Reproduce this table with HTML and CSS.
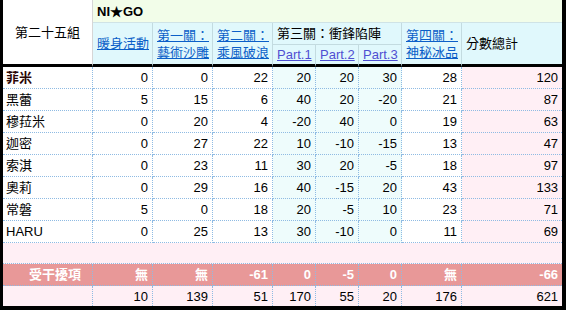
FILE: index.html
```html
<!DOCTYPE html>
<html lang="zh-Hant">
<head>
<meta charset="utf-8">
<title>第二十五組</title>
<link rel="stylesheet" href="styles.css">
</head>
<body>
<div class="frame">
<table class="score">
  <colgroup>
    <col class="c-name"><col class="c-60"><col class="c-60"><col class="c-60"><col class="c-43"><col class="c-43"><col class="c-43"><col class="c-60"><col class="c-total">
  </colgroup>
  <thead>
    <tr class="h1">
      <th rowspan="3" class="group">第二十五組</th>
      <th colspan="8" class="team">NI★GO</th>
    </tr>
    <tr class="h2">
      <th rowspan="2" class="hc"><a href="#">暖身活動</a></th>
      <th rowspan="2" class="hc"><a href="#">第一關：<br>藝術沙雕</a></th>
      <th rowspan="2" class="hc"><a href="#">第二關：<br>乘風破浪</a></th>
      <th colspan="3" class="hc">第三關：衝鋒陷陣</th>
      <th rowspan="2" class="hc"><a href="#">第四關：<br>神秘冰品</a></th>
      <th rowspan="2" class="hc last">分數總計</th>
    </tr>
    <tr class="h3">
      <th class="hc"><a href="#" class="v">Part.1</a></th>
      <th class="hc"><a href="#" class="v">Part.2</a></th>
      <th class="hc"><a href="#" class="v">Part.3</a></th>
    </tr>
  </thead>
  <tbody>
    <tr><td class="name lead">菲米</td><td>0</td><td>0</td><td>22</td><td class="p">20</td><td class="p">20</td><td class="p">30</td><td>28</td><td class="t">120</td></tr>
    <tr><td class="name">黑蕾</td><td>5</td><td>15</td><td>6</td><td class="p">40</td><td class="p">20</td><td class="p">-20</td><td>21</td><td class="t">87</td></tr>
    <tr><td class="name">穆菈米</td><td>0</td><td>20</td><td>4</td><td class="p">-20</td><td class="p">40</td><td class="p">0</td><td>19</td><td class="t">63</td></tr>
    <tr><td class="name">迦密</td><td>0</td><td>27</td><td>22</td><td class="p">10</td><td class="p">-10</td><td class="p">-15</td><td>13</td><td class="t">47</td></tr>
    <tr><td class="name">索淇</td><td>0</td><td>23</td><td>11</td><td class="p">30</td><td class="p">20</td><td class="p">-5</td><td>18</td><td class="t">97</td></tr>
    <tr><td class="name">奧莉</td><td>0</td><td>29</td><td>16</td><td class="p">40</td><td class="p">-15</td><td class="p">20</td><td>43</td><td class="t">133</td></tr>
    <tr><td class="name">常磐</td><td>5</td><td>0</td><td>18</td><td class="p">20</td><td class="p">-5</td><td class="p">10</td><td>23</td><td class="t">71</td></tr>
    <tr><td class="name">HARU</td><td>0</td><td>25</td><td>13</td><td class="p">30</td><td class="p">-10</td><td class="p">0</td><td>11</td><td class="t">69</td></tr>
    <tr class="blank"><td colspan="9"></td></tr>
    <tr class="penalty"><td class="name">受干擾項</td><td>無</td><td>無</td><td>-61</td><td>0</td><td>-5</td><td>0</td><td>無</td><td>-66</td></tr>
    <tr class="sum"><td class="name"></td><td>10</td><td>139</td><td>51</td><td>170</td><td>55</td><td>20</td><td>176</td><td>621</td></tr>
  </tbody>
</table>
</div>
</body>
</html>
```
FILE: styles.css
```css
html, body {
  margin: 0;
  padding: 0;
  background: #000;
}
body {
  width: 566px;
  height: 310px;
  overflow: hidden;
}
.frame {
  padding: 0 4px 4px 3px;
}
.score {
  table-layout: fixed;
  width: 559px;
  border-collapse: separate;
  border-spacing: 0;
  font-family: "Liberation Sans", "Noto Sans CJK TC", sans-serif;
  font-size: 13px;
  color: #000;
  background: #fff;
}
.c-name { width: 90px; }
.c-60 { width: 60px; }
.c-43 { width: 43px; }
.c-total { width: 100px; }

.score th, .score td {
  box-sizing: border-box;
  padding: 0 4px;
  white-space: nowrap;
  overflow: hidden;
}
.score th {
  font-weight: normal;
  text-align: left;
  vertical-align: middle;
  line-height: 17px;
}
.score a {
  color: #0b5fc8;
  text-decoration: underline;
}
.score a.v {
  color: #4f4fd2;
}
.h1 th { height: 23px; }
.h2 th { height: 22px; }
.h3 th { height: 22px; }
.group {
  background: #fff;
  text-align: center !important;
  border-right: 1px solid #d6d6d6;
  border-bottom: 3px solid #000;
}
.team {
  background: #f2fde9;
  font-weight: bold !important;
  border-bottom: 1px solid #cfe3e6;
}
.hc {
  background: #e0f8fc;
  border-right: 1px solid #c3dbe0;
  border-bottom: 1px solid #c3dbe0;
}
.h2 .hc[rowspan], .h3 .hc {
  border-bottom: 3px solid #000;
}
.h2 .hc.last { border-right: 0; }

.score td {
  height: 22px;
  text-align: right;
  vertical-align: middle;
  border-right: 1px dotted #8fbbe3;
  border-bottom: 1px dotted #8fbbe3;
  padding: 0 4px 0 3px;
  line-height: 15px;
}
.score td:last-child { border-right: 0; }
.score td.name {
  text-align: left;
  padding-left: 3px;
}
.score td.lead {
  font-weight: bold;
  color: #2a0606;
}
.score td.p { background: #eefcfc; }
.score td.t { background: #ffeff5; }

.blank td {
  background: #ffeff5;
  height: 21px;
}
.penalty td {
  background: #e89898;
  color: #fff;
  font-weight: bold;
}
.penalty td.name {
  text-align: right;
  padding-right: 11px;
}
.sum td {
  background: #ffeff5;
  height: 20px;
  border-bottom: 0;
}
```
